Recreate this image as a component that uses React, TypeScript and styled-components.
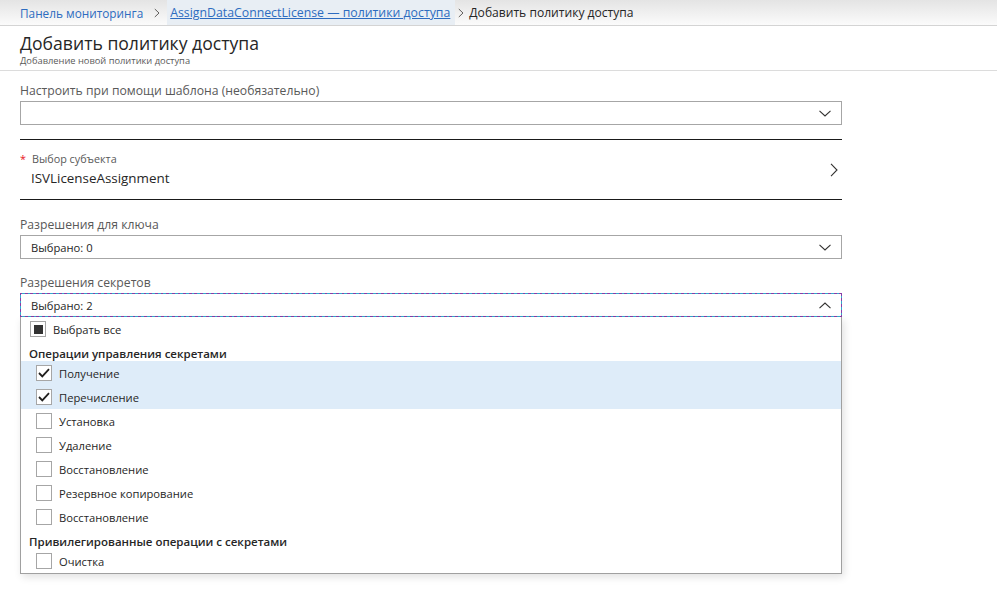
import React from "react";
import styled, { createGlobalStyle } from "styled-components";

const GlobalStyle = createGlobalStyle`
  html, body {
    margin: 0;
    padding: 0;
    background: #ffffff;
  }
  body {
    font-family: "Open Sans", "Noto Sans", "Liberation Sans", sans-serif;
    color: #323130;
  }
`;

interface Option {
  label: string;
  checked?: boolean;
}

interface Group {
  title: string;
  options: Option[];
}

const groups: Group[] = [
  {
    title: "Операции управления секретами",
    options: [
      { label: "Получение", checked: true },
      { label: "Перечисление", checked: true },
      { label: "Установка" },
      { label: "Удаление" },
      { label: "Восстановление" },
      { label: "Резервное копирование" },
      { label: "Восстановление" },
    ],
  },
  {
    title: "Привилегированные операции с секретами",
    options: [{ label: "Очистка" }],
  },
];

const ChevronDown = () => (
  <svg width="12" height="7" viewBox="0 0 12 7">
    <polyline points="0.5,0.8 6,6 11.5,0.8" fill="none" stroke="#323130" strokeWidth="1.1" />
  </svg>
);

const ChevronUp = () => (
  <svg width="12" height="7" viewBox="0 0 12 7">
    <polyline points="0.5,6.2 6,1 11.5,6.2" fill="none" stroke="#323130" strokeWidth="1.1" />
  </svg>
);

const ChevronRight = () => (
  <svg width="8" height="14" viewBox="0 0 8 14">
    <polyline points="1,0.8 7,7 1,13.2" fill="none" stroke="#323130" strokeWidth="1.1" />
  </svg>
);

const CrumbChevron = () => (
  <svg width="6" height="10" viewBox="0 0 6 10">
    <polyline points="0.8,1 5,5 0.8,9" fill="none" stroke="#605e5c" strokeWidth="1" />
  </svg>
);

const CheckMark = () => (
  <svg width="12" height="10" viewBox="0 0 12 10">
    <polyline points="1,5 4.3,8.4 11,1.2" fill="none" stroke="#201f1e" strokeWidth="1.8" />
  </svg>
);

const App: React.FC = () => {
  return (
    <>
      <GlobalStyle />
      <Page>
        <Breadcrumbs>
          <Crumb>Панель мониторинга</Crumb>
          <Sep>
            <CrumbChevron />
          </Sep>
          <CrumbLink>AssignDataConnectLicense — политики доступа</CrumbLink>
          <Sep $tight>
            <CrumbChevron />
          </Sep>
          <CrumbCurrent>Добавить политику доступа</CrumbCurrent>
        </Breadcrumbs>

        <Header>
          <Title>Добавить политику доступа</Title>
          <Subtitle>Добавление новой политики доступа</Subtitle>
        </Header>

        <Form>
          <FieldLabel>Настроить при помощи шаблона (необязательно)</FieldLabel>
          <Select>
            <SelectValue />
            <ChevronDown />
          </Select>

          <Picker>
            <PickerText>
              <PickerLabel>
                <Required>*</Required>Выбор субъекта
              </PickerLabel>
              <PickerValue>ISVLicenseAssignment</PickerValue>
            </PickerText>
            <ChevronRight />
          </Picker>

          <FieldLabel $top={14}>Разрешения для ключа</FieldLabel>
          <Select>
            <SelectValue>Выбрано: 0</SelectValue>
            <ChevronDown />
          </Select>

          <FieldLabel $top={13}>Разрешения секретов</FieldLabel>
          <Select $focused>
            <SelectValue>Выбрано: 2</SelectValue>
            <ChevronUp />
          </Select>
          <Panel>
            <SelectAllRow>
              <Box>
                <Indeterminate />
              </Box>
              <OptionLabel>Выбрать все</OptionLabel>
            </SelectAllRow>
            {groups.map((g) => (
              <React.Fragment key={g.title}>
                <GroupTitle>{g.title}</GroupTitle>
                {g.options.map((o, i) => (
                  <OptionRow key={i} $selected={o.checked}>
                    <Box>{o.checked && <CheckMark />}</Box>
                    <OptionLabel>{o.label}</OptionLabel>
                  </OptionRow>
                ))}
              </React.Fragment>
            ))}
          </Panel>
        </Form>
      </Page>
    </>
  );
};

const Page = styled.div`
  width: 100%;
  min-height: 607px;
  background: #fff;
`;

const Breadcrumbs = styled.nav`
  height: 25px;
  display: flex;
  align-items: center;
  padding-left: 20px;
  background: linear-gradient(#e4e4e4, #fbfbfb);
  border-bottom: 1px solid #d4d4d4;
  font-size: 11.8px;
`;

const Crumb = styled.span`
  color: #2d6cc0;
`;

const CrumbLink = styled.a`
  color: #2d6cc0;
  text-decoration: underline;
  font-size: 12.3px;
  height: 25px;
  line-height: 25px;
  padding: 0 5px 0 3px;
  margin-left: -3px;
  background: #e8eef4;
`;

const CrumbCurrent = styled.span`
  color: #262626;
  font-size: 12.1px;
`;

const Sep = styled.span<{ $tight?: boolean }>`
  display: flex;
  align-items: center;
  padding: ${(p) => (p.$tight ? "0 5px 0 3px" : "0 10px 0 11px")};
`;

const Header = styled.header`
  height: 44px;
  padding-left: 20px;
  border-bottom: 1px solid #dcdcdc;
  display: flex;
  flex-direction: column;
`;

const Title = styled.h1`
  margin: 5px 0 0;
  font-size: 17.6px;
  font-weight: 400;
  line-height: 24px;
  color: #262626;
`;

const Subtitle = styled.div`
  font-size: 9.3px;
  line-height: 12px;
  color: #595959;
`;

const Form = styled.div`
  width: 822px;
  margin-left: 20px;
  padding-top: 9px;
`;

const FieldLabel = styled.div<{ $top?: number }>`
  height: 20px;
  line-height: 22px;
  margin-top: ${(p) => p.$top ?? 0}px;
  font-size: 12.2px;
  color: #595959;
`;

const Select = styled.div<{ $focused?: boolean }>`
  box-sizing: border-box;
  height: 24px;
  margin-top: 1px;
  display: flex;
  align-items: center;
  padding: 0 10px 0 10px;
  border: 1px solid #a6a6a6;
  ${(p) =>
    p.$focused &&
    `
    border: 1px solid transparent;
    border-image: repeating-linear-gradient(45deg, #8a3ca8 0 2px, #34a9cc 2px 4px) 1;
  `}
`;

const SelectValue = styled.span`
  flex: 1;
  font-size: 11.2px;
  color: #262626;
`;

const Picker = styled.div`
  box-sizing: border-box;
  height: 61px;
  margin-top: 14px;
  display: flex;
  align-items: center;
  padding-right: 4px;
  border-top: 1px solid #1a1a1a;
  border-bottom: 1px solid #1a1a1a;
`;

const PickerText = styled.div`
  flex: 1;
  display: flex;
  flex-direction: column;
`;

const PickerLabel = styled.div`
  font-size: 10.8px;
  line-height: 16px;
  color: #595959;
`;

const Required = styled.span`
  color: #e81123;
  margin-right: 6px;
`;

const PickerValue = styled.div`
  padding-left: 11px;
  font-size: 13.4px;
  line-height: 22px;
  color: #262626;
`;

const Panel = styled.div`
  box-sizing: border-box;
  border: 1px solid #a0a0a0;
  border-top: none;
  box-shadow: 2px 3px 8px rgba(0, 0, 0, 0.12);
`;

const Row = styled.div`
  height: 24px;
  display: flex;
  align-items: center;
`;

const SelectAllRow = styled(Row)`
  padding-left: 9px;
`;

const OptionRow = styled(Row)<{ $selected?: boolean }>`
  padding-left: 15px;
  background: ${(p) => (p.$selected ? "#deecf9" : "transparent")};
`;

const Box = styled.span`
  box-sizing: border-box;
  width: 16px;
  height: 16px;
  border: 1px solid #a6a6a6;
  background: #fff;
  display: flex;
  align-items: center;
  justify-content: center;
  margin-right: 7px;
`;

const Indeterminate = styled.span`
  width: 9px;
  height: 9px;
  background: #333;
`;

const OptionLabel = styled.span`
  font-size: 11.2px;
  color: #262626;
`;

const GroupTitle = styled.div`
  height: 20px;
  line-height: 26px;
  padding-left: 8px;
  font-size: 11.5px;
  font-weight: 600;
  color: #262626;
`;

export default App;
